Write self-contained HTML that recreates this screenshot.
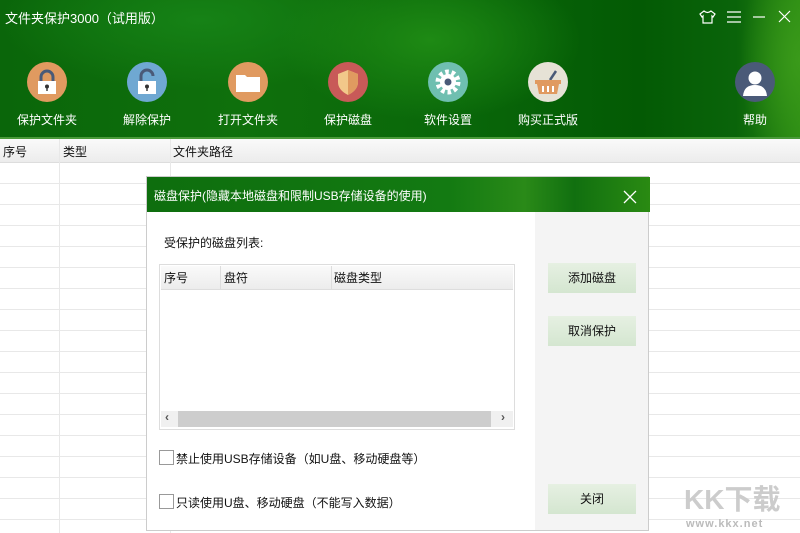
<!DOCTYPE html>
<html><head><meta charset="utf-8"><style>
*{margin:0;padding:0;box-sizing:border-box}
body{width:800px;height:533px;overflow:hidden;position:relative;background:#fff;font-family:"Liberation Sans","Noto Sans CJK SC",sans-serif;font-size:12px;color:#111}
.top{position:absolute;left:0;top:0;width:800px;height:139px;background:radial-gradient(ellipse 150px 80px at 430px 40px,#1e8a14,transparent),radial-gradient(ellipse 60px 120px at 800px 60px,#3a9a1a,transparent),radial-gradient(ellipse 200px 70px at 200px 20px,#168216,transparent),linear-gradient(90deg,#0a660a,#0f700c 30%,#0a680a 55%,#035a04 80%,#0a640a 92%,#2a8a12);border-bottom:2px solid #4a9a3a}
.title{position:absolute;left:5px;top:8px;color:#fff;font-size:13px}
.ic{position:absolute;top:62px;width:40px;height:40px;border-radius:50%}
.lb{position:absolute;top:111px;color:#fff;font-size:12px;width:100px;text-align:center}
.hdr{position:absolute;left:0;top:139px;width:800px;height:24px;background:linear-gradient(#fafafa,#ececec);border-bottom:1px solid #ddd}
.hdr span{position:absolute;top:4px;font-size:12px}
.row{position:absolute;left:0;width:800px;height:1px;background:#e8e8e8}
.vl{position:absolute;top:139px;width:1px;height:394px;background:#e8e8e8}
.dlg{position:absolute;left:146px;top:176px;width:503px;height:355px;background:#fff;border:1px solid #ccc}
.dt{position:absolute;left:0;top:0;width:503px;height:35px;background:linear-gradient(90deg,#0e6e0e,#137a12 60%,#2a8a18 75%,#117010 85%,#2a8a12)}
.dt span{position:absolute;left:7px;top:10px;color:#fff;font-size:12px}
.rp{position:absolute;left:388px;top:35px;width:113px;height:318px;background:#f4f4f4}
.btn{position:absolute;left:402px;width:88px;height:30px;background:linear-gradient(#e6f0e2,#d4e6d0);text-align:center;line-height:30px;font-size:12px}
.tbl{position:absolute;left:12px;top:87px;width:356px;height:166px;border:1px solid #ddd}
.cb{position:absolute;left:12px;width:15px;height:15px;border:1px solid #999;background:#fff}
</style></head><body>
<div class="top"></div>
<div class="title">文件夹保护3000（试用版）</div>
<svg style="position:absolute;left:699px;top:9px" width="100" height="16" viewBox="0 0 100 16" fill="none" stroke="#fff" stroke-width="1.2">
<path d="M5 2 L1 5 L3 8 L4 7 L4 14 L13 14 L13 7 L14 8 L16 5 L12 2 Q8.5 5 5 2Z"/>
<path d="M28 3H42M28 8H42M28 13H42"/>
<path d="M54 8H66"/>
<path d="M80 2L91 13M91 2L80 13"/>
</svg>
<div class="ic" style="left:27px;background:#e09a60"><svg width="40" height="40"><path d="M14 19V15a6 6 0 0 1 12 0v4" stroke="#4a5a78" stroke-width="3" fill="none"/><rect x="11" y="19" width="18" height="13" fill="#fff"/><circle cx="20" cy="24.5" r="2" fill="#333"/><rect x="19.3" y="25" width="1.4" height="4" fill="#333"/></svg></div>
<div class="ic" style="left:127px;background:#6fa8d2"><svg width="40" height="40"><path d="M14 19V14a6 6 0 0 1 12 0" stroke="#4a5a78" stroke-width="3" fill="none"/><rect x="11" y="19" width="18" height="13" fill="#fff"/><circle cx="20" cy="24.5" r="2" fill="#333"/><rect x="19.3" y="25" width="1.4" height="4" fill="#333"/></svg></div>
<div class="ic" style="left:228px;background:#e09a60"><svg width="40" height="40"><path d="M8 13H17L19 15H32V30H8Z" fill="#fff"/></svg></div>
<div class="ic" style="left:328px;background:#c85a58"><svg width="40" height="40"><path d="M20 8L30 12V20Q30 28 20 33Q10 28 10 20V12Z" fill="#f2c88a"/><path d="M20 8L30 12V20Q30 28 20 33Z" fill="#e09a60"/></svg></div>
<div class="ic" style="left:428px;background:#6fbfb0"><svg width="40" height="40"><circle cx="20" cy="20" r="10" fill="none" stroke="#fff" stroke-width="5" stroke-dasharray="3.5 2.8"/><circle cx="20" cy="20" r="8" fill="#fff"/><circle cx="20" cy="20" r="3.5" fill="#4a5a78"/></svg></div>
<div class="ic" style="left:528px;background:#e6e2d6"><svg width="40" height="40"><path d="M22 18L28 9" stroke="#4a5a78" stroke-width="2.5"/><rect x="7" y="18" width="26" height="4" fill="#e09a60"/><path d="M9 22H31L29 32H11Z" fill="#e09a60"/><path d="M15 24V30M20 24V30M25 24V30" stroke="#fff" stroke-width="2"/></svg></div>
<div class="ic" style="left:735px;background:#4a5a78"><svg width="40" height="40"><circle cx="20" cy="16" r="6.5" fill="#fff"/><path d="M8 34Q9 23 20 23Q31 23 32 34Z" fill="#fff"/></svg></div>
<div class="lb" style="left:-3px">保护文件夹</div>
<div class="lb" style="left:97px">解除保护</div>
<div class="lb" style="left:198px">打开文件夹</div>
<div class="lb" style="left:298px">保护磁盘</div>
<div class="lb" style="left:398px">软件设置</div>
<div class="lb" style="left:498px">购买正式版</div>
<div class="lb" style="left:705px">帮助</div>
<div class="hdr"><span style="left:3px">序号</span><span style="left:63px">类型</span><span style="left:173px">文件夹路径</span></div>
<div class="vl" style="left:59px"></div><div class="vl" style="left:170px"></div>
<div class="row" style="top:183px"></div><div class="row" style="top:204px"></div><div class="row" style="top:225px"></div><div class="row" style="top:246px"></div><div class="row" style="top:267px"></div><div class="row" style="top:288px"></div><div class="row" style="top:309px"></div><div class="row" style="top:330px"></div><div class="row" style="top:351px"></div><div class="row" style="top:372px"></div><div class="row" style="top:393px"></div><div class="row" style="top:414px"></div><div class="row" style="top:435px"></div><div class="row" style="top:456px"></div><div class="row" style="top:477px"></div><div class="row" style="top:498px"></div><div class="row" style="top:519px"></div>
<div class="dlg">
<div class="dt"><span>磁盘保护(隐藏本地磁盘和限制USB存储设备的使用)</span>
<svg style="position:absolute;left:476px;top:13px" width="14" height="14" stroke="#fff" stroke-width="1.3"><path d="M1 1L13 13M13 1L1 13"/></svg></div>
<div class="rp"></div>
<div style="position:absolute;left:17px;top:57px">受保护的磁盘列表:</div>
<div class="tbl">
<div style="position:absolute;left:1px;top:1px;width:352px;height:24px;background:linear-gradient(#fafafa,#ececec);border-bottom:1px solid #ddd"></div>
<div style="position:absolute;left:60px;top:1px;width:1px;height:24px;background:#ddd"></div>
<div style="position:absolute;left:171px;top:1px;width:1px;height:24px;background:#ddd"></div>
<span style="position:absolute;left:4px;top:4px">序号</span><span style="position:absolute;left:64px;top:4px">盘符</span><span style="position:absolute;left:174px;top:4px">磁盘类型</span>
<div style="position:absolute;left:1px;top:146px;width:352px;height:16px;background:#f0f0f0"></div>
<div style="position:absolute;left:18px;top:146px;width:313px;height:16px;background:#cdcdcd"></div>
<span style="position:absolute;left:5px;top:145px;font-size:12px;font-weight:bold;color:#555">‹</span>
<span style="position:absolute;left:341px;top:145px;font-size:12px;font-weight:bold;color:#555">›</span>
</div>
<div class="cb" style="top:273px"></div><div style="position:absolute;left:29px;top:273px">禁止使用USB存储设备（如U盘、移动硬盘等）</div>
<div class="cb" style="top:317px"></div><div style="position:absolute;left:29px;top:317px">只读使用U盘、移动硬盘（不能写入数据）</div>
</div>
<div class="btn" style="left:548px;top:263px">添加磁盘</div>
<div class="btn" style="left:548px;top:316px">取消保护</div>
<div class="btn" style="left:548px;top:484px">关闭</div>
<div style="position:absolute;left:684px;top:484px;font-size:28px;font-weight:bold;color:#ccc;white-space:nowrap;line-height:32px">KK下载</div>
<div style="position:absolute;left:686px;top:518px;font-size:11px;font-weight:bold;color:#bbb;letter-spacing:1px;white-space:nowrap">www.kkx.net</div>
</body></html>
